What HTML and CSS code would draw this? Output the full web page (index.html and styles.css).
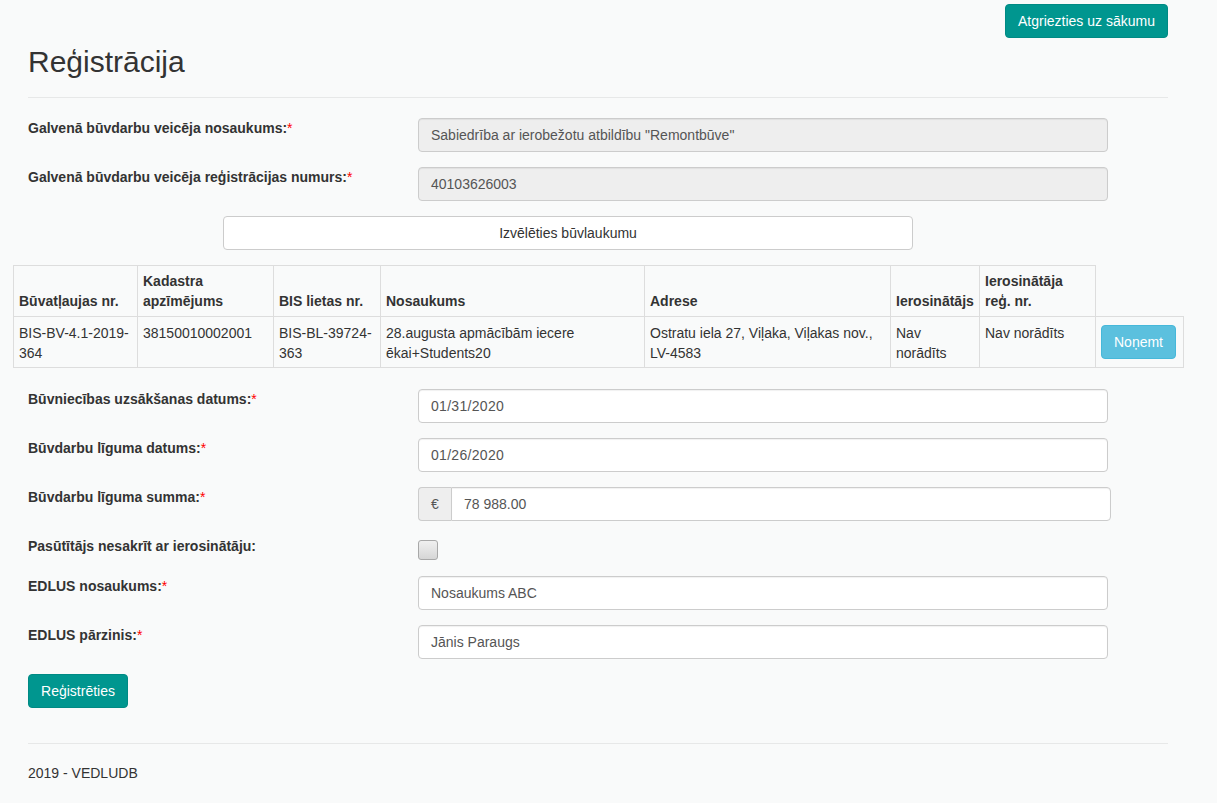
FILE: index.html
```html
<!DOCTYPE html>
<html lang="lv">
<head>
<meta charset="utf-8">
<title>Reģistrācija</title>
<link rel="stylesheet" href="styles.css">
</head>
<body>
<div class="container">
  <div class="topbar"><a class="btn btn-teal" href="#">Atgriezties uz sākumu</a></div>
  <h2 class="title">Reģistrācija</h2>
  <hr class="sep">
  <form class="form">
    <div class="row">
      <label class="lbl">Galvenā būvdarbu veicēja nosaukums:<span class="req">*</span></label>
      <div class="field"><div class="input disabled">Sabiedrība ar ierobežotu atbildību "Remontbūve"</div></div>
    </div>
    <div class="row">
      <label class="lbl">Galvenā būvdarbu veicēja reģistrācijas numurs:<span class="req">*</span></label>
      <div class="field"><div class="input disabled">40103626003</div></div>
    </div>
    <div class="pick-row"><button type="button" class="btn-default">Izvēlēties būvlaukumu</button></div>
    <table class="sites">
      <colgroup>
        <col class="c1"><col class="c2"><col class="c3"><col class="c4"><col class="c5"><col class="c6"><col class="c7"><col class="c8">
      </colgroup>
      <thead>
        <tr>
          <th>Būvatļaujas nr.</th>
          <th>Kadastra apzīmējums</th>
          <th>BIS lietas nr.</th>
          <th>Nosaukums</th>
          <th>Adrese</th>
          <th>Ierosinātājs</th>
          <th>Ierosinātāja reģ. nr.</th>
          <th class="empty"></th>
        </tr>
      </thead>
      <tbody>
        <tr>
          <td>BIS-BV-4.1-2019-364</td>
          <td>38150010002001</td>
          <td>BIS-BL-39724-363</td>
          <td>28.augusta apmācībām iecere ēkai+Students20</td>
          <td>Ostratu iela 27, Viļaka, Viļakas nov., LV-4583</td>
          <td>Nav norādīts</td>
          <td>Nav norādīts</td>
          <td><button type="button" class="btn-info">Noņemt</button></td>
        </tr>
      </tbody>
    </table>
    <div class="row">
      <label class="lbl">Būvniecības uzsākšanas datums:<span class="req">*</span></label>
      <div class="field"><div class="input date">01/31/2020</div></div>
    </div>
    <div class="row">
      <label class="lbl">Būvdarbu līguma datums:<span class="req">*</span></label>
      <div class="field"><div class="input date">01/26/2020</div></div>
    </div>
    <div class="row">
      <label class="lbl">Būvdarbu līguma summa:<span class="req">*</span></label>
      <div class="field wide">
        <div class="input-group"><span class="addon">€</span><div class="input grouped">78 988.00</div></div>
      </div>
    </div>
    <div class="row row-check">
      <label class="lbl">Pasūtītājs nesakrīt ar ierosinātāju:</label>
      <div class="field"><span class="checkbox"></span></div>
    </div>
    <div class="row">
      <label class="lbl">EDLUS nosaukums:<span class="req">*</span></label>
      <div class="field"><div class="input">Nosaukums ABC</div></div>
    </div>
    <div class="row">
      <label class="lbl">EDLUS pārzinis:<span class="req">*</span></label>
      <div class="field"><div class="input">Jānis Paraugs</div></div>
    </div>
    <button type="button" class="btn btn-teal submit">Reģistrēties</button>
  </form>
  <hr class="sep foot-sep">
  <footer class="footer">2019 - VEDLUDB</footer>
</div>
</body>
</html>
```
FILE: styles.css
```css
* { box-sizing: border-box; }
html, body { margin: 0; padding: 0; }
body {
  background: #f9fafa;
  font-family: "Liberation Sans", Arial, Helvetica, sans-serif;
  font-size: 14px;
  line-height: 20px;
  color: #333;
}
.container {
  width: 1170px;
  margin-left: 13px;
  padding: 0 15px;
}
.topbar {
  display: flex;
  justify-content: flex-end;
  padding-top: 4px;
}
.btn {
  display: inline-block;
  height: 34px;
  padding: 6px 12px;
  font-size: 14px;
  line-height: 20px;
  border-radius: 4px;
  text-decoration: none;
  font-family: inherit;
  cursor: pointer;
}
.btn-teal {
  background: #00968f;
  border: 1px solid #008a84;
  color: #fff;
}
.topbar .btn { width: 163px; text-align: center; }
.title {
  margin: 7px 0 0;
  font-size: 30px;
  line-height: 33px;
  font-weight: 500;
  color: #333;
}
.sep {
  border: 0;
  border-top: 1px solid #e7e8e8;
  margin: 19px 0 20px;
  height: 0;
}
.row {
  display: flex;
  margin-bottom: 15px;
}
.lbl {
  flex: 0 0 390px;
  font-weight: bold;
  line-height: 20px;
}
.req { color: #f00; font-weight: normal; }
.field { flex: 0 0 690px; }
.field.wide { flex: 0 0 693px; }
.input {
  height: 34px;
  padding: 6px 12px;
  border: 1px solid #ccc;
  border-radius: 4px;
  background: #fff;
  color: #555;
  font-size: 14px;
  line-height: 20px;
  box-shadow: inset 0 1px 1px rgba(0,0,0,.06);
  white-space: nowrap;
}
.input.disabled { background: #eee; }
.input.date { letter-spacing: 0.3px; }
.input-group { display: flex; }
.addon {
  flex: 0 0 33px;
  height: 34px;
  border: 1px solid #ccc;
  border-right: 0;
  border-radius: 4px 0 0 4px;
  background: #eee;
  color: #555;
  text-align: center;
  padding: 6px 0;
}
.input.grouped { flex: 1; border-radius: 0 4px 4px 0; }
.pick-row { padding-left: 195px; }
.btn-default {
  width: 690px;
  height: 34px;
  background: #fff;
  border: 1px solid #ccc;
  border-radius: 4px;
  color: #333;
  font-family: inherit;
  font-size: 14px;
  line-height: 20px;
  padding: 6px 12px;
}
.sites {
  border-collapse: collapse;
  table-layout: fixed;
  width: 1170px;
  margin: 15px -15px 21px;
}
.c1 { width: 124px; } .c2 { width: 136px; } .c3 { width: 107px; } .c4 { width: 264px; }
.c5 { width: 246px; } .c6 { width: 89px; } .c7 { width: 116px; } .c8 { width: 88px; }
.sites th, .sites td {
  border: 1px solid #ddd;
  padding: 5px;
  text-align: left;
  line-height: 20px;
}
.sites th { vertical-align: bottom; font-weight: bold; }
.sites th.empty { border: none; }
.sites td { vertical-align: top; padding: 6px 5px 4px; }
.btn-info {
  margin-top: 2px;
  width: 75px;
  height: 34px;
  background: #5bc0de;
  border: 1px solid #46b8da;
  border-radius: 4px;
  color: #fff;
  font-family: inherit;
  font-size: 14px;
  padding: 6px 0;
}
.row-check { margin-top: 1px; margin-bottom: 15px; height: 25px; }
.checkbox {
  display: block;
  margin-top: 4px;
  width: 20px;
  height: 20px;
  border: 1px solid #a8a8a8;
  border-radius: 3px;
  background: linear-gradient(#f0f0f0, #d6d6d6);
}
.submit { width: 100px; padding: 6px 0; text-align: center; margin-top: 0; }
.foot-sep { margin: 35px 0 19px; }
.footer { line-height: 20px; padding-bottom: 20px; }
```
